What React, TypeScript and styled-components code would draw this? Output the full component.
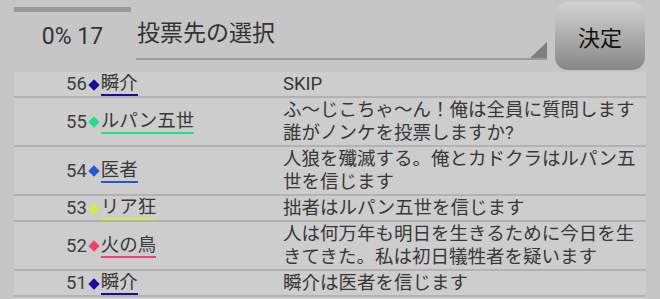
import React from "react";
import styled, { createGlobalStyle } from "styled-components";

const Global = createGlobalStyle`
  html, body { margin: 0; padding: 0; }
  body {
    width: 660px;
    height: 299px;
    overflow: hidden;
    background: #c6c6c6;
    font-family: Roboto, "Noto Sans CJK JP", "Noto Sans", sans-serif;
  }
`;

const Screen = styled.div`
  width: 660px;
  height: 299px;
  padding: 0 14px;
  box-sizing: border-box;
  display: flex;
  flex-direction: column;
  overflow: hidden;
`;

const TopBar = styled.div`
  height: 72px;
  flex: none;
  display: flex;
  align-items: flex-start;
`;

const Progress = styled.div`
  width: 117px;
  flex: none;
  display: flex;
  flex-direction: column;
  align-items: center;
  padding-top: 7px;
`;

const ProgressTrack = styled.div`
  width: 100%;
  height: 5px;
  background: #9a9a9a;
`;

const ProgressLabel = styled.div`
  margin-top: 10px;
  font-size: 23px;
  line-height: 30px;
  color: #333;
`;

const Select = styled.div`
  position: relative;
  flex: 1;
  margin-left: 5px;
  height: 60px;
  padding-top: 4px;
  box-sizing: border-box;
  border-bottom: 2px solid #9c9c9c;
  display: flex;
  align-items: center;
  font-size: 23px;
  color: #333;
  padding-left: 1px;

  &::after {
    content: "";
    position: absolute;
    right: 0;
    bottom: 0;
    width: 0;
    height: 0;
    border-left: 17px solid transparent;
    border-bottom: 16px solid #7f7f7f;
  }
`;

const Button = styled.button`
  flex: none;
  width: 90px;
  height: 68px;
  margin: 2px 1px 0 8px;
  border: none;
  border-radius: 13px;
  background: linear-gradient(#d3d3d3, #878787);
  font-family: Roboto, "Noto Sans CJK JP", sans-serif;
  font-size: 22px;
  color: #111;
  padding: 0;
  display: flex;
  align-items: center;
  justify-content: center;
`;

const List = styled.div`
  flex: 1;
  background: #cdcdcd;
  display: flex;
  flex-direction: column;
`;

const Row = styled.div`
  display: grid;
  grid-template-columns: 269px 1fr;
  padding-top: 1px;
  border-bottom: 2px solid #b2b2b2;
  font-size: 18.5px;
  line-height: 23px;
  color: #383838;
`;

const Who = styled.div`
  display: flex;
  align-items: center;
  padding-left: 52px;
`;

const Num = styled.span`
  color: #404040;
`;

const Diamond = styled.span<{ $c: string }>`
  display: inline-block;
  width: 8px;
  height: 8px;
  margin: 0 3px 0 3px;
  background: ${(p) => p.$c};
  transform: rotate(45deg);
`;

const Name = styled.span<{ $c: string }>`
  display: inline-block;
  line-height: 21px;
  border-bottom: 2px solid ${(p) => p.$c};
  color: #383838;
`;

const Said = styled.div`
  white-space: pre-line;
  padding-right: 6px;
`;

type Entry = { no: number; color: string; name: string; text: string };

const rows: Entry[] = [
  { no: 56, color: "#1c0a9e", name: "瞬介", text: "SKIP" },
  {
    no: 55,
    color: "#22de88",
    name: "ルパン五世",
    text: "ふ～じこちゃ～ん！俺は全員に質問します\n誰がノンケを投票しますか?",
  },
  {
    no: 54,
    color: "#2a55d0",
    name: "医者",
    text: "人狼を殲滅する。俺とカドクラはルパン五\n世を信じます",
  },
  { no: 53, color: "#d6ea4c", name: "リア狂", text: "拙者はルパン五世を信じます" },
  {
    no: 52,
    color: "#f2426a",
    name: "火の鳥",
    text: "人は何万年も明日を生きるために今日を生\nきてきた。私は初日犠牲者を疑います",
  },
  { no: 51, color: "#1c0a9e", name: "瞬介", text: "瞬介は医者を信じます" },
];

export default function App() {
  return (
    <>
      <Global />
      <Screen>
        <TopBar>
          <Progress>
            <ProgressTrack />
            <ProgressLabel>0% 17</ProgressLabel>
          </Progress>
          <Select>投票先の選択</Select>
          <Button>決定</Button>
        </TopBar>
        <List>
          {rows.map((r) => (
            <Row key={r.no}>
              <Who>
                <Num>{r.no}</Num>
                <Diamond $c={r.color} />
                <Name $c={r.color}>{r.name}</Name>
              </Who>
              <Said>{r.text}</Said>
            </Row>
          ))}
        </List>
      </Screen>
    </>
  );
}
